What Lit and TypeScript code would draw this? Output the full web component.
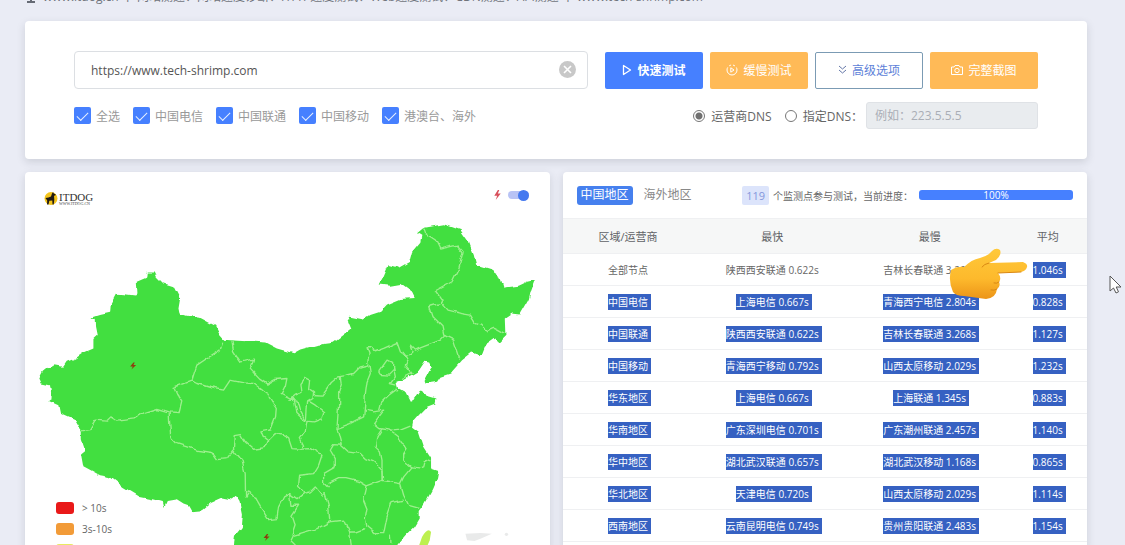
import { LitElement, html, svg, css } from "lit";
import { customElement, property } from "lit/decorators.js";

type Row = [string, string, string, string];

const ROWS: Row[] = [
  ["全部节点", "陕西西安联通 0.622s", "吉林长春联通 3.268s", "1.046s"],
  ["中国电信", "上海电信 0.667s", "青海西宁电信 2.804s", "0.828s"],
  ["中国联通", "陕西西安联通 0.622s", "吉林长春联通 3.268s", "1.127s"],
  ["中国移动", "青海西宁移动 0.792s", "山西太原移动 2.029s", "1.232s"],
  ["华东地区", "上海电信 0.667s", "上海联通 1.345s", "0.883s"],
  ["华南地区", "广东深圳电信 0.701s", "广东潮州联通 2.457s", "1.140s"],
  ["华中地区", "湖北武汉联通 0.657s", "湖北武汉移动 1.168s", "0.865s"],
  ["华北地区", "天津电信 0.720s", "山西太原移动 2.029s", "1.114s"],
  ["西南地区", "云南昆明电信 0.749s", "贵州贵阳联通 2.483s", "1.154s"],
];

const OPERATORS = ["全选", "中国电信", "中国联通", "中国移动", "港澳台、海外"];

const OUTLINE =
  "58,640 68,620 85,606 105,600 130,605 140,590 165,580 192,562 220,550 220,522 233,510 228,485 227,462 217,457 240,450 270,443 272,420 290,386 320,388 345,391 352,385 350,350 378,338 380,322 404,322 410,335 430,355 462,365 480,400 475,430 478,445 500,452 540,458 585,482 598,508 612,524 640,526 735,532 770,550 820,564 840,553 890,540 940,533 975,507 990,495 980,470 990,455 1030,463 1050,450 1080,440 1100,418 1140,402 1183,399 1175,382 1140,357 1110,362 1078,358 1090,335 1105,300 1135,308 1167,290 1175,260 1200,230 1203,212 1190,205 1210,188 1270,178 1320,195 1345,230 1360,270 1368,302 1410,315 1440,335 1450,367 1495,362 1520,350 1543,345 1532,375 1525,405 1500,448 1475,445 1453,460 1455,515 1438,532 1425,520 1390,545 1380,570 1355,562 1325,585 1290,625 1260,635 1250,650 1215,655 1212,645 1220,630 1234,605 1230,593 1215,590 1195,620 1160,640 1128,650 1132,667 1155,680 1170,710 1185,700 1203,673 1215,690 1248,700 1245,715 1220,725 1195,750 1178,770 1175,785 1195,800 1210,845 1232,880 1232,910 1254,917 1250,940 1235,975 1210,1020 1195,1040 1195,1060 1180,1085 1155,1110 1125,1145 1110,1170 640,1170 642,1130 645,1110 665,1085 668,1045 660,1005 648,990 635,1003 605,997 575,1010 545,1035 515,1038 505,1020 490,1015 470,1002 440,1007 432,1025 428,1010 400,1003 360,995 335,980 310,965 270,935 240,930 190,903 183,865 195,855 185,825 185,800 165,765 120,745 115,720 85,707 95,700 90,660 65,655";

const BORDERS = [
  "608,530 600,555 560,580 530,600 520,630 515,647 462,667 470,685 488,710 480,742 445,740 410,730 370,742 345,758 290,765 275,755 262,768 225,765 208,793 185,797",
  "515,647 530,655 570,667 610,675 630,645 670,653 700,655 740,685 768,730 766,755 750,795 722,800 728,815 745,828 735,847 700,852 675,830 660,805 642,808 640,853 620,880 590,883 575,862 530,855 470,835 452,815 449,780 447,740",
  "635,528 640,560 660,590 675,588 700,582 690,612 718,642 740,657 765,643 800,640 795,665 783,688 810,702 822,700 830,745 855,768",
  "735,847 745,825 765,805 790,812 805,820 815,850 840,852 870,850 905,870 895,900 880,925 835,930 832,960 855,985",
  "640,853 665,885 675,925 676,995 685,980 700,990 720,1025 745,1063 770,1060 775,1025 790,995 808,985 830,1000 850,985 870,980 885,965 905,990 915,985 925,1020 928,1065",
  "858,768 850,755 838,735 830,705 810,702 825,690 845,682 842,655 855,638 868,645 865,670 880,680 878,700 862,710 860,740 858,768 880,770 905,760 910,740 885,720 865,708",
  "880,688 905,690 930,655 955,635 970,632 1000,625 1020,605 1042,600 1046,560 1040,545 1055,545 1062,560 1090,550 1130,532 1140,560 1160,575 1175,560 1170,540 1185,555 1200,548 1260,525 1275,510",
  "960,635 963,655 955,680 955,720 950,790 963,840 940,838 930,855 945,880 945,905 910,925 910,950 925,965",
  "860,770 855,800 840,820 850,840 840,852",
  "1046,600 1050,625 1040,650 1035,690 1032,735 1030,755 990,775 950,790",
  "963,840 985,860 1020,865 1035,880 1060,890 1085,915 1087,945 1040,962 1020,950 980,940 955,940 925,955",
  "1032,735 1060,740 1090,735 1075,755 1060,775 1078,790 1110,795 1140,792 1170,780",
  "1075,735 1080,715 1105,690 1130,672",
  "1085,790 1070,815 1065,845 1080,860 1085,885 1085,945 1110,950 1140,955 1150,935 1175,905 1150,885 1150,865 1160,850 1140,835 1130,810 1110,795",
  "1175,905 1195,908 1210,905 1215,885 1230,890",
  "1140,955 1150,990 1165,1020 1200,1030",
  "1150,1005 1115,1012 1100,1055 1090,1105 1065,1105 1040,1085 1035,1060 1040,1030 1030,1005 1040,962",
  "1035,1090 1010,1100 985,1100 970,1065 928,1070 890,1090 860,1098 820,1110 810,1130 830,1150",
  "808,985 812,1020 835,1020 815,1050 825,1080 815,1110",
  "1110,1105 1112,1140 M 985,1100 990,1150",
  "1075,620 1100,585 1120,595 1120,615 1105,630 1080,628 1075,620",
  "1120,610 1125,635 1110,655 1128,660",
  "1150,560 1165,580 1155,600 1175,625 1145,640",
  "1210,190 1215,205 1245,225 1258,252 1310,240 1328,260 1315,310 1295,350 1245,377 1265,405 1260,415 1225,425 1235,455 1265,485 1270,510 1300,525 1318,580",
  "1260,412 1280,435 1320,445 1350,450 1365,475 1380,480 1402,500 1425,490 1452,505",
];

const linePath = (points: string) => `M ${points}`;
const bolt = "M5 0 0 8H4L2 14 9 5H5L7 0Z";

@customElement("china-map")
class ChinaMap extends LitElement {
  static styles = css`
    :host { display: block; }
    svg { display: block; width: 100%; }
    .land { fill: #43df40; }
    .borders { fill: none; stroke: #9df08e; stroke-width: 4; stroke-linejoin: round; }
  `;
  render() {
    return html`<svg viewBox="15 150 1572 1005" role="img" aria-label="中国地区">
      <defs>
        <filter id="coast" filterUnits="userSpaceOnUse" x="0" y="100" width="1600" height="1100">
          <feTurbulence type="fractalNoise" baseFrequency="0.04" numOctaves="1" seed="4"></feTurbulence>
          <feDisplacementMap in="SourceGraphic" scale="18" xChannelSelector="R" yChannelSelector="G"></feDisplacementMap>
        </filter>
      </defs>
      <g filter="url(#coast)">
        <path class="land" d="${linePath(OUTLINE)}Z"></path>
        <g class="borders">${BORDERS.map((b) => svg`<path d=${linePath(b)}></path>`)}</g>
      </g>
      <path d="M1190 1158 1205 1115Q1222 1085 1232 1100L1228 1125 1214 1158Z" fill="#bdf04f"></path>
      <path d="M1335 1105 1380 1103 1414 1105 1380 1120 1362 1127 1340 1125Z" fill="#e9eaea"></path>
      <circle cx="1458" cy="1107" r="5" fill="#e9eaea"></circle>
      <path d=${bolt} transform="translate(348 592) scale(2 1.5) translate(-9 0)" fill="#8e3d10"></path>
      <path d=${bolt} transform="translate(748 1106) scale(2 1.5) translate(-9 0)" fill="#8e3d10"></path>
    </svg>`;
  }
}

@customElement("result-table")
class ResultTable extends LitElement {
  @property({ attribute: false }) rows: Row[] = [];
  static styles = css`
    table { width: 100%; border-collapse: collapse; table-layout: fixed; text-align: center; }
    th, td { padding: 0; border: solid #eff0f2; border-width: 1px 0; }
    th { height: 34px; background: #f6f7f7; color: #606266; font-size: 11px; font-weight: 400; }
    td { height: 31px; font-size: 10px; line-height: 16px; color: #666; }
    .area { width: 25%; }
    .fast { width: 30%; }
    .slow { width: 30%; }
    .mark { display: inline-block; height: 16px; background: #3661c2; color: #fff; padding-right: 3px; margin-right: -3px; }
  `;
  render() {
    return html`<table>
      <thead><tr>
        <th class="area">区域/运营商</th><th class="fast">最快</th><th class="slow">最慢</th><th>平均</th>
      </tr></thead>
      <tbody>${this.rows.map((row, r) => html`<tr>${row.map((cell, c) =>
        html`<td>${r > 0 || c === 3 ? html`<span class="mark">${cell}</span>` : cell}</td>`)}</tr>`)}</tbody>
    </table>`;
  }
}

@customElement("app-root")
class AppRoot extends LitElement {
  static styles = css`
    :host {
      display: block; position: relative; height: 100vh; overflow: hidden; box-sizing: border-box;
      padding: 0 38px 0 25px;
      background: #eaecf5;
      font-family: "Open Sans", "Noto Sans CJK SC", sans-serif;
      font-size: 12px; color: #666;
    }
    * { box-sizing: border-box; }
    button, input { font: inherit; margin: 0; }
    .notice { display: flex; align-items: center; gap: 6px; margin: -11px 0 16px; height: 16px; line-height: 16px; font-size: 12px; white-space: nowrap; color: #70747c; }
    .card { background: #fff; border-radius: 4px; box-shadow: 0 3px 8px rgba(40, 50, 60, 0.15); }
    .search { padding: 30px 49px; margin-bottom: 13px; }
    .line { display: flex; align-items: center; }
    .target { position: relative; flex: 1; margin-right: 17px; }
    .target input { display: block; width: 100%; height: 38px; border: 1px solid #dcdfe3; border-radius: 4px; padding: 0 40px 0 16px; font-size: 12px; color: #555; outline: 0; }
    .clear { position: absolute; right: 12px; top: 10px; width: 17px; height: 17px; padding: 0; border: 0; background: none; }
    .clear svg { display: block; }
    .actions { display: flex; gap: 7px; }
    .btn { display: flex; align-items: center; justify-content: center; gap: 5px; width: 98px; height: 37px; padding: 0; border: 0; border-radius: 2px; color: #fff; background: #ffba57; font-size: 12px; white-space: nowrap; }
    .wide { width: 108px; }
    .primary { background: #4680ff; font-weight: 600; }
    .outline { background: #fff; color: #5d7fd8; border: 1px solid #7b9bb4; }
    .options { margin-top: 13px; height: 27px; justify-content: space-between; }
    .checks { display: flex; gap: 13px; color: #999; }
    label { display: flex; align-items: center; white-space: nowrap; }
    .checks label { gap: 5px; }
    .checks input { appearance: none; display: grid; place-items: center; width: 17px; height: 17px; border-radius: 2px; background: #4680ff; }
    .checks input::before { content: ""; width: 10px; height: 5px; border: solid #e8f0ff; border-width: 0 0 1px 1px; transform: translateY(-1px) rotate(-45deg); }
    .dns { display: flex; align-items: center; }
    .dns label { gap: 6px; margin-right: 13px; }
    .dns .custom { margin-right: 3px; }
    .dns [type="radio"] { appearance: none; width: 12px; height: 12px; border: 1px solid #777; border-radius: 50%; background: #fff; }
    .dns [type="radio"]:checked { background: radial-gradient(#707070 0 3px, #fff 4px); }
    .address { width: 172px; height: 27px; padding: 0 8px; border: 1px solid #dfe2e6; border-radius: 3px; background: #e9ecef; }
    .address::placeholder { color: #aaaeb6; opacity: 1; }
    .panels { display: grid; grid-template-columns: 1fr 1fr; gap: 13px; align-items: stretch; }
    .map { position: relative; }
    .maphead { display: flex; justify-content: space-between; height: 43px; padding: 17px 21px 0 18px; }
    .logo { display: block; }
    .switch { height: 12px; gap: 7px; }
    .switch input { appearance: none; display: flex; align-items: center; justify-content: flex-end; width: 21px; height: 8px; border-radius: 4px; background: #b8c3f5; }
    .switch input::before { content: ""; width: 11px; height: 11px; flex: none; border-radius: 50%; background: #4579ef; }
    .legend { position: absolute; left: 31px; top: 325px; margin: 0; padding: 0; list-style: none; font-size: 10px; }
    .legend li { display: flex; align-items: center; gap: 8px; height: 21px; }
    .swatch { width: 18px; height: 12px; border-radius: 3px; }
    .red { background: #e91919; }
    .orange { background: #f29b38; }
    .yellow { background: #e9ea60; }
    .results { position: relative; }
    .tabs { display: flex; align-items: center; height: 46px; padding: 0 14px; white-space: nowrap; }
    .tab { height: 19px; padding: 0 4px; border: 0; border-radius: 3px; background: none; font-size: 12px; line-height: 18px; color: #888; margin-right: 7px; }
    .on { background: #4680ee; color: #fff; }
    .count { margin-left: auto; height: 19px; padding: 0 4px; border-radius: 2px; background: #dce4fb; color: #8497dc; font-size: 11px; line-height: 19px; }
    .status { margin: 0 6px 0 4px; font-size: 10px; }
    .progress { width: 154px; height: 10px; border-radius: 3px; background: #4680ff; color: #fff; text-align: center; font-size: 10px; line-height: 10px; }
    .hand { position: absolute; right: 59px; top: 75px; }
    .cursor { position: absolute; right: 3px; top: 275px; }
  `;

  render() {
    return html`
      <div class="notice">
        <svg width="12" height="12" viewBox="0 0 12 12" fill="none" stroke="#666b75"><path d="M1 1h10v7H1zM2 11h8M6 8v3" stroke-width="2"/></svg>
        <span>www.itdog.cn 中 网站测速、网站速度诊断、HTTP速度测试、Web速度测试、CDN测速、API测速 中 www.tech-shrimp.com</span>
      </div>
      <section class="card search">
        <div class="line">
          <div class="target">
            <input type="text" aria-label="网址" .value=${"https://www.tech-shrimp.com"}>
            <button class="clear" aria-label="清除"><svg width="17" height="17" viewBox="0 0 17 17"><circle cx="8.5" cy="8.5" r="8.5" fill="#c8c8c8"/><path d="m5 5 7 7m0-7-7 7" stroke="#fff" stroke-width="1.6"/></svg></button>
          </div>
          <div class="actions">
            <button class="btn primary"><svg width="10" height="12" viewBox="0 0 10 12" fill="none" stroke="#fff" stroke-width="1.3" stroke-linejoin="round"><path d="M1.500 1.500v9L8.500 6z"/></svg>快速测试</button>
            <button class="btn"><svg width="12" height="12" viewBox="0 0 12 12" fill="none" stroke="#fff"><circle cx="6" cy="6" r="5" stroke-dasharray="18 2 2 2 2 2"/><path d="M4.800 3.800v4.400L8 6z" stroke-linejoin="round"/></svg>缓慢测试</button>
            <button class="btn wide outline"><svg width="9" height="10" viewBox="0 0 9 10" fill="none" stroke="#6477a8"><path d="m1 1 3.500 3L8 1M1 5l3.500 3L8 5"/></svg>高级选项</button>
            <button class="btn wide"><svg width="12" height="12" viewBox="0 0 12 12" fill="none" stroke="#fff"><path d="M.5 3h2.500L4 1.500h4L9 3h2.500v7.500H.5z" stroke-linejoin="round"/><circle cx="6" cy="6.500" r="2.200"/></svg>完整截图</button>
          </div>
        </div>
        <div class="line options">
          <div class="checks">${OPERATORS.map((name) => html`<label><input type="checkbox" checked>${name}</label>`)}</div>
          <div class="dns">
            <label><input type="radio" name="dns" checked>运营商DNS</label>
            <label class="custom"><input type="radio" name="dns">指定DNS：</label>
            <input class="address" type="text" aria-label="指定DNS" placeholder="例如：223.5.5.5" disabled>
          </div>
        </div>
      </section>
      <div class="panels">
        <section class="card map">
          <div class="maphead">
            <svg class="logo" width="54" height="18" viewBox="0 0 54 18">
              <circle cx="8" cy="9.500" r="6.500" fill="#f3c41d"/>
              <path d="M9 4.500 10 3l.8 1.500 2 1-.5 1-1.300.2.300 4-.6 4.800H9.500l-.2-4-3 .3-.8 3.700H4l.2-4L2.500 9l3-.5L8 7.500z" fill="#201a12"/>
              <text x="16" y="12" font-family="Liberation Serif, serif" font-size="11" fill="#333">ITDOG</text>
              <text x="16" y="16" font-family="Liberation Serif, serif" font-size="4" fill="#444">WWW.ITDOG.CN</text>
            </svg>
            <label class="switch"><svg width="7" height="10" viewBox="0 0 9 14"><path d=${bolt} fill="#d9505c"/></svg><input type="checkbox" role="switch" aria-label="动画" checked></label>
          </div>
          <china-map></china-map>
          <ul class="legend">
            <li><span class="swatch red"></span>&gt; 10s</li>
            <li><span class="swatch orange"></span>3s-10s</li>
            <li><span class="swatch yellow"></span></li>
          </ul>
        </section>
        <section class="card results">
          <div class="tabs">
            <button class="tab on">中国地区</button><button class="tab">海外地区</button>
            <span class="count">119</span><span class="status">个监测点参与测试，当前进度：</span>
            <div class="progress" role="progressbar" aria-valuenow="100">100%</div>
          </div>
          <result-table .rows=${ROWS}></result-table>
          <svg class="hand" width="80" height="53" viewBox="0 0 80 53" aria-hidden="true">
            <defs><linearGradient id="skin" x1="0" y1="0" x2="0" y2="1"><stop offset="0" stop-color="#ffc93a"/><stop offset=".6" stop-color="#fdb92c"/><stop offset="1" stop-color="#ec9418"/></linearGradient></defs>
            <path d="M3 23Q9 19 16 20C21 15 26 12 32 11Q40 9 44 4 48 0 52 3 54 8 48 13L41 16 75 15Q80 17 79 20 78 24 73 25L50 26Q54 31 51 35 53 39 49 42 48 51 38 52L16 49Q8 49 5 45 0 34 3 23Z" fill="url(#skin)"/>
            <path d="M73 25 50 26M51 35Q49 37 46 36M49 42Q46 44 43 43M41 16Q36 17 34 20" fill="none" stroke="#d98713" stroke-linecap="round"/>
          </svg>
        </section>
      </div>
      <svg class="cursor" width="13" height="19" viewBox="0 0 13 19" aria-hidden="true"><path d="M1 1v15l3.500-3 2.500 5 2.500-1.200L7.200 12H12z" fill="#fff" stroke="#555"/></svg>
    `;
  }
}
